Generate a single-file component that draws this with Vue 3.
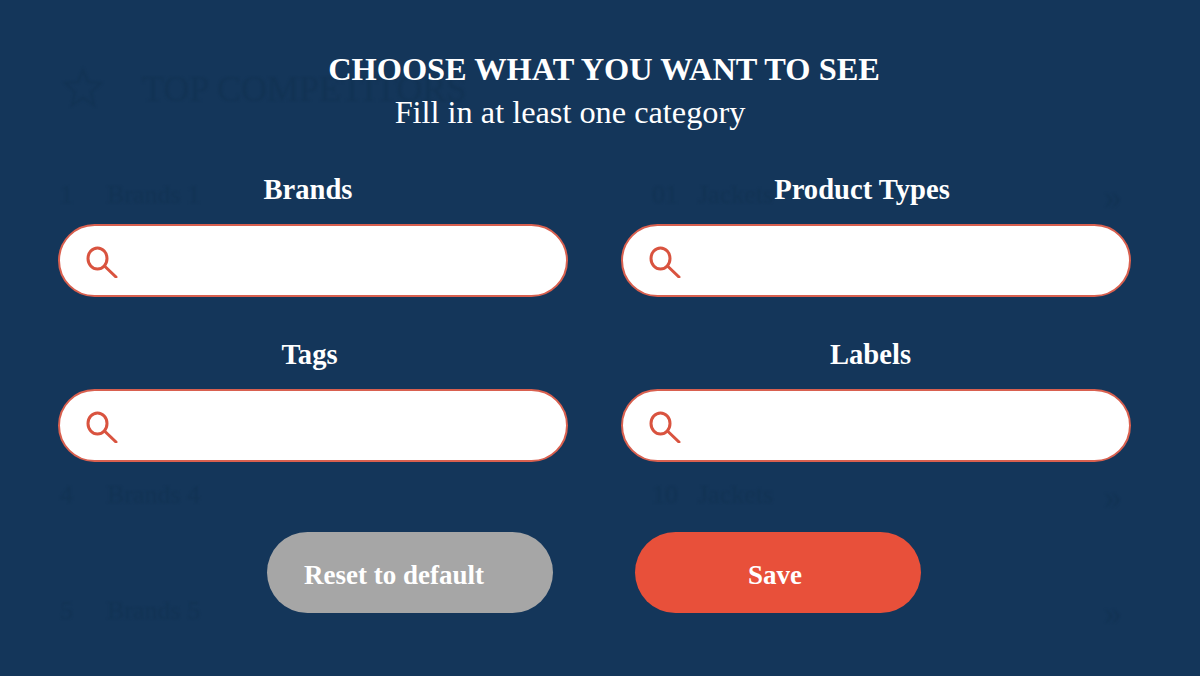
<template>
  <div class="page">
    <!-- list dimmed behind the modal -->
    <div class="ghost" aria-hidden="true">
      <div class="ghost-title">
        <svg width="46" height="46" viewBox="0 0 46 46" fill="none" stroke="#123354" stroke-width="2">
          <path d="M23 4l5 12 13 1-10 9 3 13-11-7-11 7 3-13-10-9 13-1z" />
        </svg>
        <span>TOP COMPETITORS</span>
      </div>
      <div v-for="row in ghostRows" :key="row.cls" class="ghost-row" :class="row.cls">
        <span class="ghost-num">{{ row.num }}</span>
        <span>{{ row.label }}</span>
      </div>
      <span v-for="c in ['c1', 'c4', 'c5']" :key="c" class="ghost-arrow" :class="c">»</span>
    </div>

    <div class="modal">
      <header class="head">
        <h1>CHOOSE WHAT YOU WANT TO SEE</h1>
        <p>Fill in at least one category</p>
      </header>

      <div class="fields">
        <div v-for="field in fields" :key="field.name" class="field">
          <label :class="field.cls">{{ field.name }}</label>
          <div class="search">
            <svg width="34" height="34" viewBox="0 0 34 34" fill="none" stroke="#d9533f" stroke-width="3" stroke-linecap="round">
              <ellipse cx="11.5" cy="14.5" rx="9.5" ry="10.5" />
              <path d="M19 22.5l11 10.5" />
            </svg>
          </div>
        </div>
      </div>

      <div class="actions">
        <button class="btn reset" type="button">Reset to default</button>
        <button class="btn save" type="button">Save</button>
      </div>
    </div>
  </div>
</template>

<script setup>
const fields = [
  { name: 'Brands', cls: 'l-brands' },
  { name: 'Product Types', cls: 'l-types' },
  { name: 'Tags', cls: 'l-tags' },
  { name: 'Labels', cls: 'l-labels' },
]

const ghostRows = [
  { num: '1', label: 'Brands 1', cls: 'r1' },
  { num: '4', label: 'Brands 4', cls: 'r4' },
  { num: '5', label: 'Brands 5', cls: 'r5' },
  { num: '01', label: 'Jackets', cls: 'r1 right' },
  { num: '10', label: 'Jackets', cls: 'r4 right' },
]
</script>

<style>
html, body { margin: 0; background: #14365a; }
</style>

<style scoped>
.page {
  position: relative;
  width: 1200px;
  height: 676px;
  overflow: hidden;
  background: #14365a;
  font-family: "Liberation Serif", "Times New Roman", serif;
  color: #fff;
}

.ghost {
  position: absolute;
  inset: 0;
  color: #123354;
  font-size: 26px;
  filter: blur(0.8px);
}
.ghost-title {
  position: absolute;
  left: 60px;
  top: 66px;
  display: flex;
  align-items: center;
  gap: 36px;
  font-size: 36px;
}
.ghost-row { position: absolute; left: 60px; display: flex; gap: 34px; }
.ghost-row.right { left: 652px; gap: 20px; }
.ghost-arrow { position: absolute; left: 1104px; font-size: 36px; line-height: 36px; }
.r1 { top: 180px; }
.r4 { top: 480px; }
.r5 { top: 596px; }
.c1 { top: 178px; }
.c4 { top: 478px; }
.c5 { top: 594px; }

.modal {
  position: relative;
  box-sizing: border-box;
  height: 676px;
  padding: 51px 69px 0 58px;
}

.head { text-align: center; }
.head h1 {
  margin: 0;
  font-size: 32.4px;
  line-height: 36px;
  font-weight: 700;
  padding-left: 19px;
}
.head p {
  margin: 7px 0 0;
  font-size: 32.3px;
  line-height: 36px;
  padding-right: 49px;
}

.fields {
  display: grid;
  grid-template-columns: 510px 510px;
  column-gap: 53px;
  row-gap: 42px;
  margin-top: 44px;
}
.field label {
  display: block;
  text-align: center;
  font-size: 28.6px;
  line-height: 32px;
  font-weight: 700;
  margin-bottom: 18px;
}
.l-brands { padding-right: 10px; }
.l-types { padding-right: 28px; }
.l-tags { padding-right: 7px; }
.l-labels { padding-right: 11px; }

.search {
  box-sizing: border-box;
  height: 73px;
  border: 2px solid #d9604f;
  border-radius: 37px;
  background: #fff;
  display: flex;
  align-items: center;
  padding-left: 26px;
}

.actions {
  display: flex;
  gap: 82px;
  margin-top: 70px;
  margin-left: 209px;
}
.btn {
  width: 286px;
  height: 81px;
  border: 0;
  border-radius: 41px;
  padding: 5px 0 0;
  font-family: inherit;
  font-size: 27px;
  font-weight: 700;
  color: #fff;
}
.reset { background: #a6a6a6; padding-right: 32px; }
.save { background: #e8503a; padding-right: 6px; }
</style>
